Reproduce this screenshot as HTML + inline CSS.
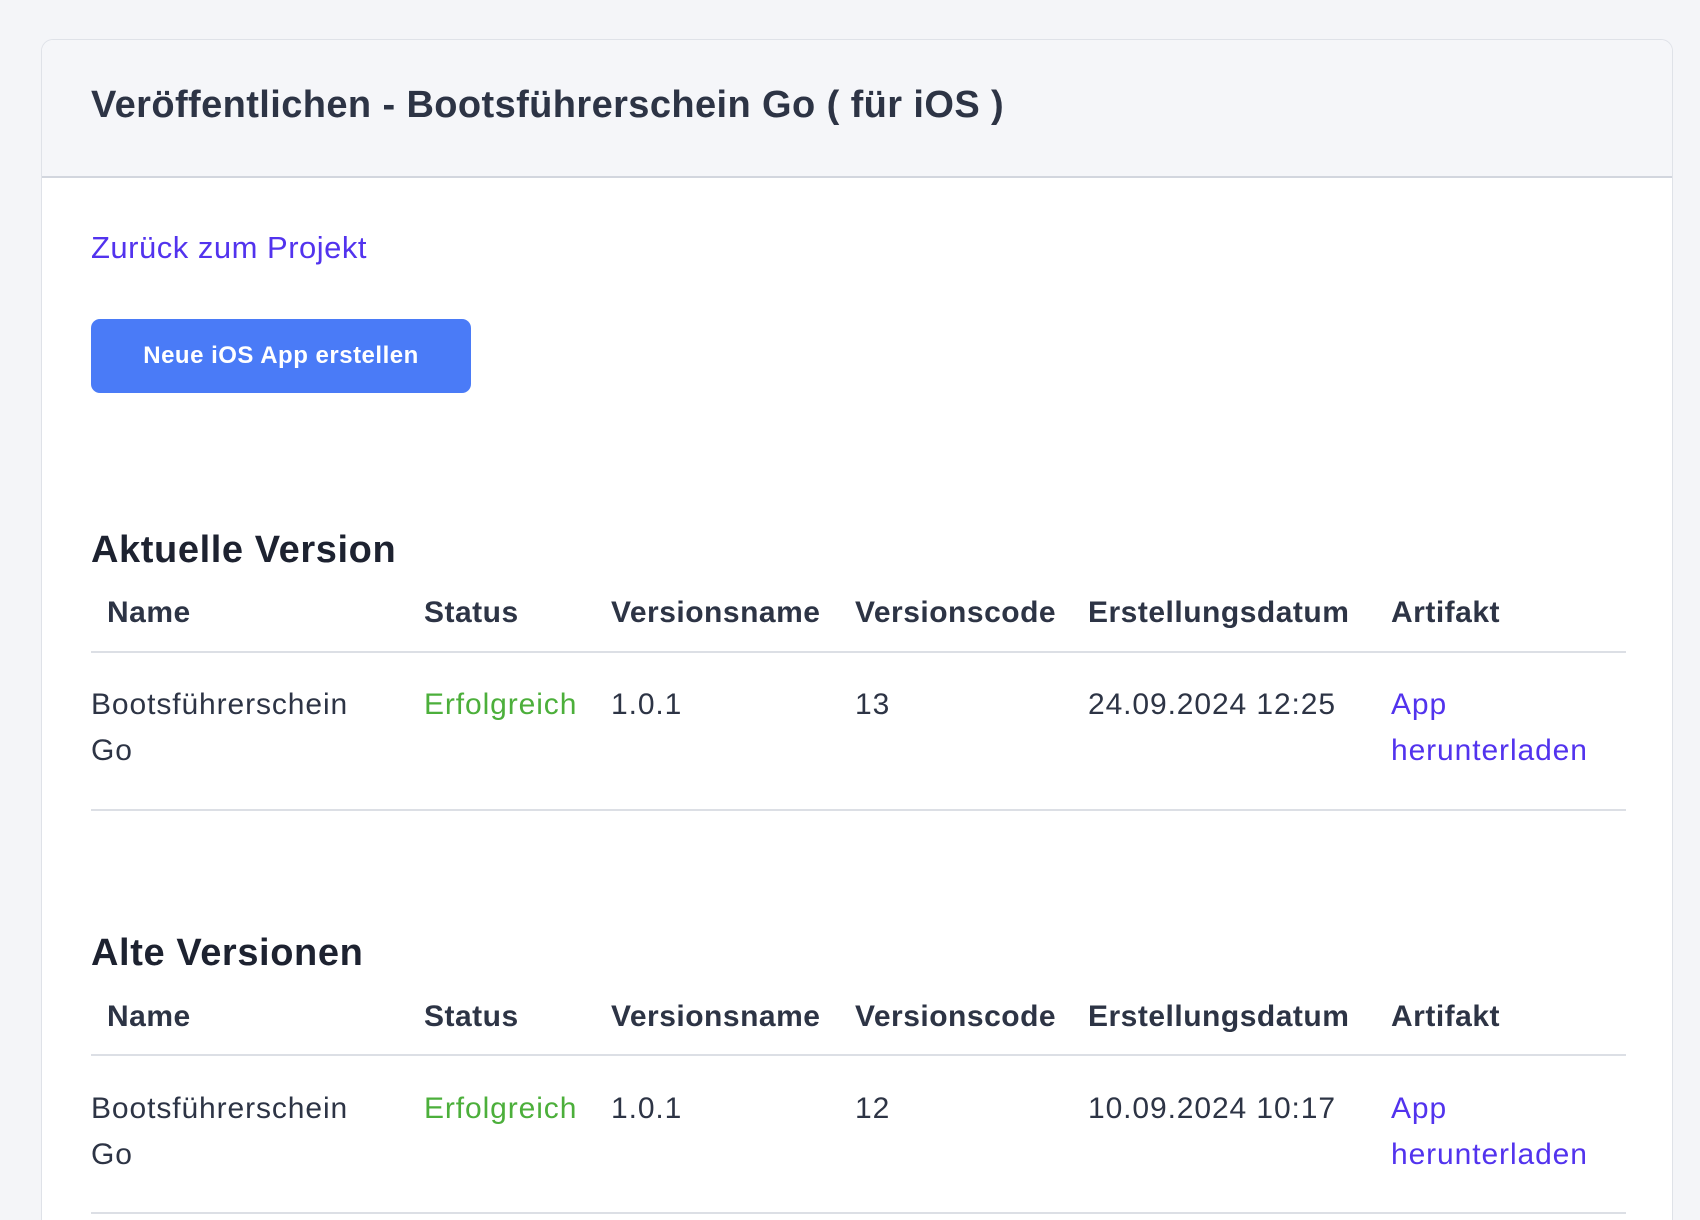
<!DOCTYPE html>
<html><head><meta charset="utf-8"><style>
*{margin:0;padding:0;box-sizing:border-box}
html{width:1700px;height:1220px;overflow:hidden}
body{width:1700px;height:1220px;background:#f4f5f8;font-family:"Liberation Sans",sans-serif;color:#2d3445;position:relative;overflow:hidden}
.card{position:absolute;left:41px;top:39px;width:1632px;height:1181px;background:#fff;border:1px solid #dfe2e8;border-bottom:none;border-radius:12px 12px 0 0;overflow:hidden}
.hdr{position:absolute;left:0;top:0;right:0;height:138px;background:#f5f6f9;border-bottom:2px solid #d2d6de}
.t{position:absolute;white-space:nowrap}
.title{left:49px;top:44px;font-size:38px;font-weight:bold;color:#2d3445;letter-spacing:0.4px}
.link{color:#5233ee}
.btn{position:absolute;left:49px;top:279px;width:380px;height:74px;background:#4a7bf7;border-radius:9px;color:#fff;font-weight:bold;font-size:24px;letter-spacing:0.5px;text-align:center;line-height:74px}
h2{position:absolute;font-size:38px;font-weight:bold;color:#1d2230;white-space:nowrap;letter-spacing:0.6px}
.th{font-size:30px;font-weight:bold;letter-spacing:0.5px}
.td{font-size:30px;letter-spacing:0.9px}
.line{position:absolute;left:49px;width:1535px;height:2px;background:#dcdfe5}
.g{color:#4caf3b}
</style></head><body>
<div class="card">
<div class="hdr"></div>
<div class="t title">Veröffentlichen - Bootsführerschein Go ( für iOS )</div>
<div class="t link" style="left:49px;top:190px;font-size:31px;letter-spacing:0.5px">Zurück zum Projekt</div>
<div class="btn">Neue iOS App erstellen</div>

<h2 style="left:49px;top:489px">Aktuelle Version</h2>
<div class="t th" style="left:65px;top:556px">Name</div>
<div class="t th" style="left:382px;top:556px">Status</div>
<div class="t th" style="left:569px;top:556px">Versionsname</div>
<div class="t th" style="left:813px;top:556px">Versionscode</div>
<div class="t th" style="left:1046px;top:556px">Erstellungsdatum</div>
<div class="t th" style="left:1349px;top:556px">Artifakt</div>
<div class="line" style="top:611px"></div>
<div class="t td" style="left:49px;top:648px">Bootsführerschein</div>
<div class="t td" style="left:49px;top:694px">Go</div>
<div class="t td g" style="left:382px;top:648px">Erfolgreich</div>
<div class="t td" style="left:569px;top:648px">1.0.1</div>
<div class="t td" style="left:813px;top:648px">13</div>
<div class="t td" style="left:1046px;top:648px">24.09.2024 12:25</div>
<div class="t td link" style="left:1349px;top:648px">App</div>
<div class="t td link" style="left:1349px;top:694px">herunterladen</div>
<div class="line" style="top:769px"></div>

<h2 style="left:49px;top:892px">Alte Versionen</h2>
<div class="t th" style="left:65px;top:960px">Name</div>
<div class="t th" style="left:382px;top:960px">Status</div>
<div class="t th" style="left:569px;top:960px">Versionsname</div>
<div class="t th" style="left:813px;top:960px">Versionscode</div>
<div class="t th" style="left:1046px;top:960px">Erstellungsdatum</div>
<div class="t th" style="left:1349px;top:960px">Artifakt</div>
<div class="line" style="top:1014px"></div>
<div class="t td" style="left:49px;top:1052px">Bootsführerschein</div>
<div class="t td" style="left:49px;top:1098px">Go</div>
<div class="t td g" style="left:382px;top:1052px">Erfolgreich</div>
<div class="t td" style="left:569px;top:1052px">1.0.1</div>
<div class="t td" style="left:813px;top:1052px">12</div>
<div class="t td" style="left:1046px;top:1052px">10.09.2024 10:17</div>
<div class="t td link" style="left:1349px;top:1052px">App</div>
<div class="t td link" style="left:1349px;top:1098px">herunterladen</div>
<div class="line" style="top:1172px"></div>
</div>
</body></html>
